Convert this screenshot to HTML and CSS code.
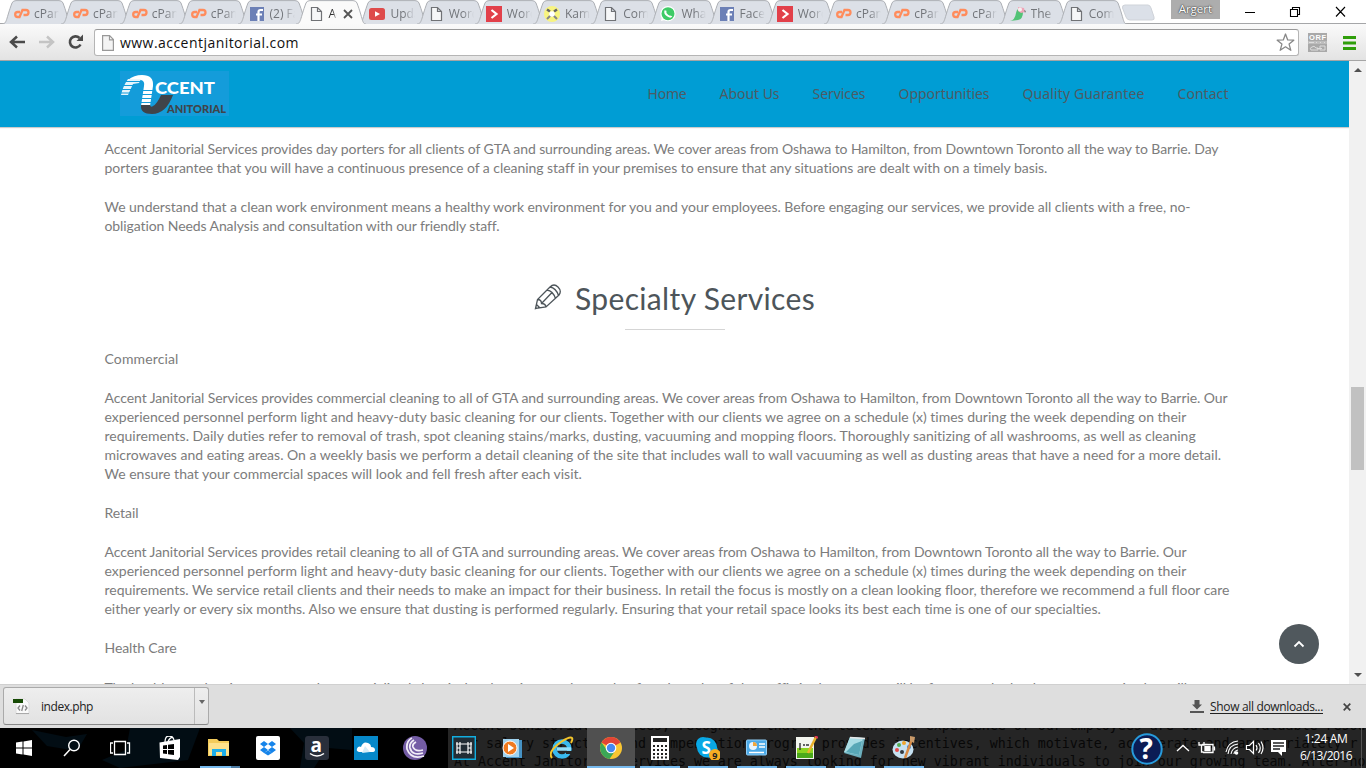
FILE: index.html
```html
<!DOCTYPE html>
<html lang="en">
<head>
<meta charset="utf-8">
<title>Accent Janitorial</title>
<link rel="stylesheet" href="styles.css">
</head>
<body>
<svg class="defs" width="0" height="0">
  <symbol id="tab" viewBox="0 0 70 24"><path d="M0 24C5 24 4 19 10 3Q11 .6 14 .6H57Q60 .6 61 3C67 19 66 24 70 24" stroke="#adb0b5"/></symbol>
  <symbol id="cp" viewBox="0 0 17 16"><path d="M7 6H4.700a2.500 2.500 0 0 0 0 5h1.800L9.500 4H13a2.500 2.500 0 0 1 0 5h-2.500" fill="none" stroke="#ff8c5c" stroke-width="2.300"/></symbol>
  <symbol id="fb" viewBox="0 0 17 16"><path d="M1 1h14v14H1z" fill="#6c80b6"/><path d="M9.500 15V6q0-2 2-2H14M7 8.500h6" fill="none" stroke="#fff" stroke-width="2.200"/></symbol>
  <symbol id="page" viewBox="0 0 17 16"><path d="M3.500 1.500h6l4 4v9h-10zM9.500 1.500v4h4" fill="#f6f7f8" stroke="#707276" stroke-width="1.200"/></symbol>
  <symbol id="yt" viewBox="0 0 17 16"><rect y="2" width="16" height="12" rx="2.500" fill="#de4b4b"/><path d="M6 5.300v5.400L11 8z" fill="#fff"/></symbol>
  <symbol id="red" viewBox="0 0 17 16"><path d="M0 0h16v16H0z" fill="#e2404a"/><path d="M5.500 4l5 4-5 4" fill="none" stroke="#fff" stroke-width="2.200"/></symbol>
  <symbol id="kam" viewBox="0 0 17 16"><circle cx="8" cy="8" r="8" fill="#f8f480"/><path d="M3 13l4-4M13 13L9 9" stroke="#888" stroke-width="2"/><path d="M3 3.500l3 2M13 3.500l-3 2" stroke="#666" stroke-width="2.500"/><circle cx="8" cy="8" r="2.800" fill="#fff"/></symbol>
  <symbol id="wa" viewBox="0 0 17 16"><circle cx="8" cy="7.700" r="7.600" fill="#fff"/><path d="M1 15l1-4 3 3z" fill="#fff"/><circle cx="8" cy="7.700" r="6.500" fill="#3ecb67"/><path d="M5.500 4.500q-1 3 2 5t4 .5" fill="none" stroke="#fff" stroke-width="2"/></symbol>
  <symbol id="bird" viewBox="0 0 17 16"><path d="M0 15q5-1 6-8 1-5 5-5l2 4q0 7-5 8z" fill="#52c376"/><path d="M8 1l6 1 1 4-4 1-3-2z" fill="#efa4b7"/><circle cx="10" cy="3.500" r="2" fill="#f8eef0"/><path d="M14 4l2 1-1 2z" fill="#777"/></symbol>
</svg>

<header class="tabstrip">
  <div class="tab"><svg class="shape"><use href="#tab"/></svg><svg class="fav"><use href="#cp"/></svg><span>cPane</span></div>
  <div class="tab"><svg class="shape"><use href="#tab"/></svg><svg class="fav"><use href="#cp"/></svg><span>cPane</span></div>
  <div class="tab"><svg class="shape"><use href="#tab"/></svg><svg class="fav"><use href="#cp"/></svg><span>cPane</span></div>
  <div class="tab"><svg class="shape"><use href="#tab"/></svg><svg class="fav"><use href="#cp"/></svg><span>cPane</span></div>
  <div class="tab"><svg class="shape"><use href="#tab"/></svg><svg class="fav"><use href="#fb"/></svg><span>(2) Fa</span></div>
  <div class="tab active"><svg class="shape"><use href="#tab"/></svg><svg class="fav"><use href="#page"/></svg><span>Ac</span><svg class="x" width="10" height="10"><path d="M1 1l8 8M9 1L1 9" stroke="#555" stroke-width="1.800"/></svg></div>
  <div class="tab late"><svg class="shape"><use href="#tab"/></svg><svg class="fav"><use href="#yt"/></svg><span>Upda</span></div>
  <div class="tab late"><svg class="shape"><use href="#tab"/></svg><svg class="fav"><use href="#page"/></svg><span>Word</span></div>
  <div class="tab late"><svg class="shape"><use href="#tab"/></svg><svg class="fav"><use href="#red"/></svg><span>Word</span></div>
  <div class="tab late"><svg class="shape"><use href="#tab"/></svg><svg class="fav"><use href="#kam"/></svg><span>Kam</span></div>
  <div class="tab late"><svg class="shape"><use href="#tab"/></svg><svg class="fav"><use href="#page"/></svg><span>Com</span></div>
  <div class="tab late"><svg class="shape"><use href="#tab"/></svg><svg class="fav"><use href="#wa"/></svg><span>Wha</span></div>
  <div class="tab late"><svg class="shape"><use href="#tab"/></svg><svg class="fav"><use href="#fb"/></svg><span>Face</span></div>
  <div class="tab late"><svg class="shape"><use href="#tab"/></svg><svg class="fav"><use href="#red"/></svg><span>Word</span></div>
  <div class="tab late"><svg class="shape"><use href="#tab"/></svg><svg class="fav"><use href="#cp"/></svg><span>cPane</span></div>
  <div class="tab late"><svg class="shape"><use href="#tab"/></svg><svg class="fav"><use href="#cp"/></svg><span>cPane</span></div>
  <div class="tab late"><svg class="shape"><use href="#tab"/></svg><svg class="fav"><use href="#cp"/></svg><span>cPane</span></div>
  <div class="tab late"><svg class="shape"><use href="#tab"/></svg><svg class="fav"><use href="#bird"/></svg><span>The</span></div>
  <div class="tab late"><svg class="shape"><use href="#tab"/></svg><svg class="fav"><use href="#page"/></svg><span>Com</span></div>
  <svg class="newtab" width="34" height="18"><path d="M4 1h23q2 0 3 3l3 9q1 3-2 3H9q-3 0-4-3L1.500 4Q1 1 4 1z" fill="#dbe0e8" stroke="#cfd3d9"/></svg>
  <div class="user">Argert</div>
  <svg class="winctl" width="110" height="24"><path d="M5 12.500h10M50.500 9.500h7v7h-7zM52.500 9V7.500h7v7H58M96 7l9 9.500M105 7l-9 9.500" fill="none" stroke="#000" stroke-width="1.100"/></svg>
</header>

<div class="toolbar">
  <svg class="navicons" width="94" height="36" fill="none">
    <path d="M25 18H12M17 12.500L11 18l6 5.500" stroke="#4a4a4a" stroke-width="2.500"/>
    <path d="M39 18h13M47 12.500l6 5.500-6 5.500" stroke="#c4c4c4" stroke-width="2.500"/>
    <path d="M80.500 20.500a5.600 5.600 0 1 1-1-6.500" stroke="#4a4a4a" stroke-width="2.600"/><path d="M83 10.500v6.500h-6.500z" fill="#4a4a4a"/>
  </svg>
  <div class="omnibox">
    <svg width="12" height="16"><path d="M.6.600h7l3.800 4v10.800H.6zM7.500.600v4.200h4" fill="#f4f4f4" stroke="#999" stroke-width="1.200"/></svg>
    <span class="url" data-w="179">www.accentjanitorial.com</span>
    <svg class="star" width="19" height="19"><path d="M9.500 1l2.200 5.900 6.100.3-4.700 3.900 1.700 6.200-5.300-3.500-5.300 3.500 1.700-6.200L1.200 7.200l6.100-.3z" fill="#fff" stroke="#888" stroke-width="1.300" stroke-linejoin="round"/></svg>
  </div>
  <svg class="ext" width="19" height="19"><path d="M0 0h19v19H0z" fill="#a9a9a9"/><path d="M0 8h19v3H0z" fill="#bdbdbd"/><text x="1" y="7" textLength="17">ORF</text><path d="M1 9.500h5M8 9.500h1M12 9.500h1M16 9.500h1M3 17q-2-2 1-3 2-2 4 1h2v2zM12 13h5v4h-5zM9 15.500h5" stroke="#ddd" fill="none"/></svg>
  <svg class="burger" width="13" height="14"><path d="M0 1.500h13M0 7h13M0 12.500h13" stroke="#2f9e0a" stroke-width="2.800"/></svg>
</div>

<main class="viewport">
  <div class="site">
    <div class="sitebar">
      <svg class="logo" width="109" height="45">
        <path d="M0 0h109v45H0z" fill="#149cda"/>
        <path d="M8 9Q14 4 22 4q12 0 11 11l-3 20h-9l3-20q1-5-3-6z" fill="#fff"/>
        <path d="M8 8h13l-2 4-6 1-5 11H1Q3 15 8 8z" fill="#e8f5fc"/>
        <path d="M0 10.500h20M0 14.500h20M0 18.500h20M0 22h20M20 19.500h14M20 23.500h14M20 27.500h14M20 31.500h14" stroke="#149cda" stroke-width="1.200"/>
        <path d="M21 34h9q1 3 3 1 4-2 8-11h12Q46 43 32 43 20 43 21 34z" fill="#404449"/>
        <text class="l1" x="35" y="22.500" textLength="60" lengthAdjust="spacingAndGlyphs">CCENT</text>
        <text class="l2" x="47" y="41.500" textLength="59" lengthAdjust="spacingAndGlyphs">ANITORIAL</text>
      </svg>
      <nav><a data-w="39">Home</a><a data-w="60">About Us</a><a data-w="53">Services</a><a data-w="91">Opportunities</a><a data-w="122">Quality Guarantee</a><a data-w="51">Contact</a></nav>
    </div>
    <article>
      <p><span data-w="1114">Accent Janitorial Services provides day porters for all clients of GTA and surrounding areas. We cover areas from Oshawa to Hamilton, from Downtown Toronto all the way to Barrie. Day</span>
      <span data-w="943">porters guarantee that you will have a continuous presence of a cleaning staff in your premises to ensure that any situations are dealt with on a timely basis.</span></p>
      <p><span data-w="1086">We understand that a clean work environment means a healthy work environment for you and your employees. Before engaging our services, we provide all clients with a free, no-</span>
      <span data-w="395">obligation Needs Analysis and consultation with our friendly staff.</span></p>
      <h2><svg width="28" height="28" fill="none" stroke="#4d555a" stroke-width="1.300"><path d="M1.500 25.500l2-9L16 4q4-4 8 0t1 8L12 24zM3.500 16.500q4 0 4 4 4 0 4.500 3.500M16 4q6 1 8.500 8.500M13 7q6 1 8.500 8.500M7.500 20.500L18 9.500M1.500 25.500l4-1-3-3z"/></svg><span data-w="240">Specialty Services</span></h2>
      <p><span data-w="74">Commercial</span></p>
      <p><span data-w="1123">Accent Janitorial Services provides commercial cleaning to all of GTA and surrounding areas. We cover areas from Oshawa to Hamilton, from Downtown Toronto all the way to Barrie. Our</span>
      <span data-w="1082">experienced personnel perform light and heavy-duty basic cleaning for our clients. Together with our clients we agree on a schedule (x) times during the week depending on their</span>
      <span data-w="1092">requirements. Daily duties refer to removal of trash, spot cleaning stains/marks, dusting, vacuuming and mopping floors. Thoroughly sanitizing of all washrooms, as well as cleaning</span>
      <span data-w="1117">microwaves and eating areas. On a weekly basis we perform a detail cleaning of the site that includes wall to wall vacuuming as well as dusting areas that have a need for a more detail.</span>
      <span data-w="477">We ensure that your commercial spaces will look and fell fresh after each visit.</span></p>
      <p><span data-w="34">Retail</span></p>
      <p><span data-w="1082">Accent Janitorial Services provides retail cleaning to all of GTA and surrounding areas. We cover areas from Oshawa to Hamilton, from Downtown Toronto all the way to Barrie. Our</span>
      <span data-w="1082">experienced personnel perform light and heavy-duty basic cleaning for our clients. Together with our clients we agree on a schedule (x) times during the week depending on their</span>
      <span data-w="1125">requirements. We service retail clients and their needs to make an impact for their business. In retail the focus is mostly on a clean looking floor, therefore we recommend a full floor care</span>
      <span data-w="997">either yearly or every six months. Also we ensure that dusting is performed regularly. Ensuring that your retail space looks its best each time is one of our specialties.</span></p>
      <p><span data-w="72">Health Care</span></p>
      <p class="next"><span data-w="1082">The healthcare cleaning sector can be a specialized chemical and equipment due to that fact that a lot of the traffic in these areas will be from people that have compromised or still</span></p>
    </article>
    <div class="totop"><svg width="12" height="8"><path d="M1.500 6.500L6 2l4.500 4.500" fill="none" stroke="#fff" stroke-width="1.800"/></svg></div>
  </div>
  <div class="scrollbar"><i class="up"></i><i class="thumb"></i><i class="down"></i></div>
</main>

<section class="downloads">
  <div class="dl">
    <svg width="18" height="17"><path d="M3 1h9l4 4v11H3z" fill="#fafafa" stroke="#ddd"/><path d="M0 1h10v4H0z" fill="#174a05"/><path d="M7 7.500L5 10l2 2.500M12 7.500l2 2.500-2 2.500M10.300 7L8.700 13" fill="none" stroke="#888" stroke-width="1.300"/><path d="M3 15.500h13" stroke="#aaa"/></svg>
    <span data-w="52">index.php</span><div class="drop"><i></i></div>
  </div>
  <div class="showall">
    <svg width="14" height="13"><path d="M4.500 0h5v4.500H12L7 9.500l-5-5h2.500zM0 11h14v2H0z" fill="#555"/></svg>
    <span data-w="113">Show all downloads...</span>
    <svg class="x2" width="8" height="8"><path d="M.7.700l6.600 6.600M7.300.700L.7 7.300" stroke="#444" stroke-width="1.700"/></svg>
  </div>
</section>

<footer class="taskbar">
  <svg class="wall" width="448" height="40" fill="#020d14"><path d="M32 2l34 7 21-3-10 17-30-5zM130 0h70l-12 32-68 8-18-8 24-10zM290 0h44v9l-20 31h-14l4-25zM330 0h22v22l-24-2z"/></svg>
  <pre class="ghost">Accent Janitorial Services, recognizes that the talent and experience of our employees are our most valuable resource
Our salary structure and compensation program provides incentives, which motivate, accelerate and appropriately r
At Accent Janitorial Services we are always looking for new vibrant individuals to join our growing team. After-hou</pre>
  <div class="apps">
    <div><svg viewBox="0 0 24 24"><path d="M4 6.500L10.500 5.500v6H4zM11.500 5.400L20 4v7.500h-8.500zM4 12.500h6.500v6L4 17.500zM11.500 12.500H20V20l-8.500-1.400z" fill="#fff"/></svg></div>
    <div><svg viewBox="0 0 24 24"><circle cx="13" cy="9.500" r="5.300" fill="none" stroke="#fff" stroke-width="1.400"/><path d="M9 13.500L3 20" stroke="#fff" stroke-width="1.500"/></svg></div>
    <div><svg viewBox="0 0 24 24"><path d="M4.500 5.500h11v13h-11zM3 7H.5v10H3M17 7h2.500v10H17" fill="none" stroke="#fff" stroke-width="1.300"/></svg></div>
    <div><svg viewBox="0 0 24 24"><path d="M.5 6.500L21 3v18l-2 3-18-2z" fill="#fff"/><path d="M6 6Q6 0 10 0t5 4M9 6q1-4 5-5" fill="none" stroke="#fff" stroke-width="1.300"/><path d="M4 9.500l4-.6v4H4zM9 8.700l6-.7v5H9zM4 14h4v4l-4-.5zM9 14h6v5l-6-.8z" fill="#000"/></svg></div>
    <div class="run stack"><svg viewBox="0 0 24 24"><path d="M0 3h9l2 2h10v15H0z" fill="#f3cb5b"/><path d="M1 7h20v12H1z" fill="#fde18c"/><path d="M4 20v-7h14v7h-4v-4H8v4z" fill="#1eaee8"/></svg></div>
    <div><svg viewBox="0 0 24 24"><rect width="24" height="24" rx="2" fill="#fff"/><path d="M8 5l4 3-4 3-4-3zM16 5l4 3-4 3-4-3zM8 11l4 3-4 3-4-3zM16 11l4 3-4 3-4-3zM8 17l4-2.500 4 2.500-4 2.500z" fill="#1684ea"/></svg></div>
    <div><svg viewBox="0 0 24 24"><rect width="24" height="24" rx="3" fill="#292f3b"/><text class="amz" x="5.500" y="15.500">a</text><path d="M5 17.500q7 5 14 0" fill="none" stroke="#fff" stroke-width="1.500"/></svg></div>
    <div><svg viewBox="0 0 24 24"><path d="M0 0h24v24H0z" fill="#0688c9"/><path d="M5 16q-4-1-1-5 2-1 3 0 2-6 7-4 3 1 3 4 4 0 4 3 0 2-3 2z" fill="#fff"/><path d="M8 17l3-7 5 6z" fill="#d4ecf7"/></svg></div>
    <div><svg viewBox="0 0 24 24"><circle cx="12" cy="12" r="12" fill="#745da5"/><g fill="none" stroke="#f1edf7" stroke-width="1.800"><path d="M21 20Q8 24 4 13 3 5 9 2M20 17Q9 20 7 12q-1-5 4-8M20 14q-8 2-10-3-1-3 3-5"/></g></svg></div>
    <div><svg viewBox="0 0 24 24"><path d="M.7.700h22.600v22.600H.7z" fill="#222d35" stroke="#12aee0" stroke-width="1.400"/><path d="M5 6v12M8 6v12M16 6v12M19 6v12M4 8h16M4 16h16M5 12h3M16 12h3" stroke="#fff" stroke-width="1.200"/></svg></div>
    <div><svg viewBox="0 0 24 24"><path d="M5 4h16v18H5z" fill="#4692c4"/><path d="M2 3h16v18H2z" fill="#9fd2ef"/><circle cx="9" cy="12" r="7" fill="#f07a20" stroke="#fff"/><path d="M7 8v8l6-4z" fill="#fff"/></svg></div>
    <div><svg viewBox="0 0 24 24"><circle cx="12" cy="13" r="7.500" fill="none" stroke="#39b9ee" stroke-width="4.500"/><path d="M7 13h14" stroke="#93def8" stroke-width="3.500"/><path d="M16 15h7v3h-7z" fill="#252525"/><path d="M2 22Q-3 16 11 6q9-6 11-4 1 1-1 5" fill="none" stroke="#f3c52b" stroke-width="2"/></svg></div>
    <div class="run current"><svg viewBox="0 0 24 24"><circle cx="12" cy="12" r="11" fill="#f9c632"/><path d="M12 12L2.500 6.500a11 11 0 0 1 19 0z" fill="#e24436"/><path d="M2.500 6.500a11 11 0 0 0 8 16.400L16 15l-8-1z" fill="#3ba757"/><circle cx="12" cy="12" r="5.300" fill="#fff"/><circle cx="12" cy="12" r="4.200" fill="#4688f1"/></svg></div>
    <div class="run"><svg viewBox="0 0 24 24"><path d="M3 0h18v24H3z" fill="#fff"/><path d="M5 2h14v4H5z" fill="#222"/><path d="M5 10h14M5 14h14M5 18h14M5 21.500h14" stroke="#222" stroke-width="2" stroke-dasharray="2 2"/></svg></div>
    <div class="run"><svg viewBox="0 0 24 24"><circle cx="7" cy="8" r="7" fill="#09a8e5"/><circle cx="15" cy="15" r="7" fill="#09a8e5"/><circle cx="11" cy="11.500" r="10" fill="#09a8e5"/><text class="sky" x="5.500" y="17.500">S</text><circle cx="19" cy="19" r="6" fill="#f8ad22"/><text class="nine" x="16.300" y="22.500">9</text></svg></div>
    <div class="run"><svg viewBox="0 0 24 24"><rect x="1.500" y="4" width="20" height="15" rx="1" fill="#4ba9e7" stroke="#90cef7"/><circle cx="8" cy="10" r="4" fill="#e7f4fe"/><path d="M8 10V6a4 4 0 0 1 4 4z" fill="#f0a63b"/><path d="M14 8h6M14 11h6M4 16.500h15" stroke="#fff" stroke-width="1.700"/></svg></div>
    <div class="run"><svg viewBox="0 0 24 24"><path d="M2 1h18v22H2z" fill="#f3f5ee"/><path d="M3 12h16v10H3z" fill="#8bd420"/><path d="M3 17h16v5H3z" fill="#4ba91b"/><path d="M6 7v7M9 9h2M12 9h3" stroke="#333" stroke-width="1.400"/><path d="M22 1L14 17" stroke="#eab22c" stroke-width="2.500"/><path d="M21 0l3 2" stroke="#d35" stroke-width="2"/></svg></div>
    <div class="run"><svg viewBox="0 0 24 24"><path d="M7 1l15 1-4 20L1 17z" fill="#6cafbd"/><path d="M7 1l13 1-4 17L1 16z" fill="#a9dce4"/><path d="M11 8l8-3-3 14-13-3z" fill="#58a7b6"/><path d="M7 1.500l15 1" stroke="#e6e6e6" stroke-width="1.500"/></svg></div>
    <div class="run"><svg viewBox="0 0 24 24"><ellipse cx="11" cy="13.500" rx="10.500" ry="9" fill="#c6e1f2"/><circle cx="5" cy="14" r="2" fill="#e34b4b"/><circle cx="7" cy="9" r="2" fill="#52ad52"/><circle cx="12" cy="7" r="2" fill="#f1a42c"/><circle cx="17" cy="11" r="2" fill="#3d80d4"/><circle cx="10" cy="16" r="2" fill="#303840"/><path d="M20 3l-7 19" stroke="#d98b45" stroke-width="2.500"/><path d="M18 0l5 1-1 6-4-2z" fill="#c99a69"/></svg></div>
  </div>
  <div class="tray">
    <svg width="160" height="40" fill="none" stroke="#fff" stroke-width="1.300"><circle cx="16" cy="21" r="14.700" fill="#0b1c55" stroke="#279bdc" stroke-width="2"/><text class="q" x="8.500" y="31">?</text><path d="M46 23l6-5.500 6 5.500"/><g transform="translate(3)"><path d="M68 16.500h11v8H69M80.500 18.500v4M65 14v3h5v-3M67.500 17v7h2"/><path d="M71 18.500h5v4h-5z" fill="#fff"/></g><g transform="translate(10)"><path d="M87 26q1-9 10-10M90 26q1-6 7-7M93 26q0-3 4-4M85 24q2-10 12-11" stroke-width="1.100"/><circle cx="95.500" cy="25" r="1.800" fill="#fff" stroke="none"/></g><g transform="translate(9)"><path d="M106.500 17.500h3l4-4v12l-4-4h-3zM116 17q2 3 0 5.500M118.500 15q3.500 5 0 10M121 13.500q4 6.500 0 12.500" stroke-width="1.200"/></g><g transform="translate(9)"><path d="M131 12h15v12h-4v4l-4-4h-7z" fill="#fff" stroke="none"/><path d="M133 15h11M133 18h11M133 21h7" stroke="#222"/></g></svg>
    <div class="clock"><span data-w="43">1:24 AM</span><span data-w="52">6/13/2016</span></div>
    <i class="edge"></i>
  </div>
</footer>
<script src="fit.js"></script>
</body>
</html>
```
FILE: styles.css
```css
* { box-sizing: border-box; }
body { margin: 0; width: 1366px; height: 768px; overflow: hidden; display: flex; flex-direction: column; font-family: "Open Sans", "Noto Sans", sans-serif; background: #fff; }
svg { flex: none; display: block; }
.defs { position: absolute; }
[data-w] { white-space: nowrap; }

.tabstrip { height: 24px; flex: none; display: flex; padding-left: 2px; background: #fff; position: relative; border-bottom: 1px solid #a5a6a8; }
.tab { position: relative; width: 58.9px; height: 24px; flex: none; display: flex; align-items: center; padding: 3px 0 0 11px; }
.tab.late { width: 58.2px; }
.shape { position: absolute; left: 0; top: 0; width: 70px; height: 24px; fill: #dce0e7; }
.fav { position: relative; width: 17px; height: 16px; }
.tab span { position: relative; margin-left: 4px; width: 25px; overflow: hidden; white-space: nowrap; font-size: 12px; line-height: 18px; color: #72757a; -webkit-mask-image: linear-gradient(90deg, #000 55%, transparent); mask-image: linear-gradient(90deg, #000 55%, transparent); }
.tab.active { z-index: 2; width: 62px; }
.active .shape { fill: #fafafa; }
.tab.active .fav { margin-left: 1px; }
.tab.active span { width: 9px; margin-left: 3px; flex: none; color: #333; }
.x { position: relative; flex: none; margin-left: 6px; }
.newtab { margin: 4px 0 0 6px; }
.user { margin-left: 16px; width: 49px; height: 19px; background: #adadad; color: #fff; font-size: 11.500px; line-height: 18px; text-align: center; text-shadow: 0 0 2px #333, 0 0 1px #333; }
.winctl { margin-left: 20px; }

.toolbar { height: 37px; flex: none; display: flex; background: linear-gradient(#fafafa, #e3e3e3); border-bottom: 1px solid #a5a5a5; }
.omnibox { width: 1205px; height: 27px; margin-top: 5px; border: 1px solid #b5b5b5; border-top-color: #999; border-radius: 3px; background: #fff; display: flex; align-items: center; padding: 0 3px 0 7px; }
.url { margin-left: 6px; font-size: 14px; color: #111; }
.star { margin-left: auto; }
.ext { margin: 9px 0 0 9px; font: bold 7.500px "Liberation Sans", sans-serif; }
.ext text { fill: #fff; }
.burger { margin: 12px 0 0 16px; }

.viewport { height: 623px; flex: none; display: flex; }
.site { width: 1349px; position: relative; overflow: hidden; }
.sitebar { height: 66px; background: #009dd4; box-shadow: 0 1px 1px #ccc; display: flex; padding-left: 120px; }
.logo { margin-top: 10px; }
.logo text { font-family: Lato, sans-serif; font-weight: 900; }
.l1 { font-size: 17px; fill: #fff; }
.l2 { font-size: 10.500px; fill: #404449; }
nav { display: flex; gap: 33px; margin-left: 418.500px; font: 14px/66px "Noto Sans", sans-serif; color: #4d5b64; }
article { padding: 12px 0 0 104.500px; font-family: Lato, sans-serif; font-size: 14px; line-height: 19px; color: #7c7c7c; }
article p { margin: 0 0 20px; display: flex; flex-direction: column; align-items: flex-start; }
h2 { margin: 46px 9px 19px 0; width: 1140px; height: 49px; position: relative; display: flex; justify-content: center; gap: 13px; font-size: 30px; font-weight: 400; line-height: 35px; color: #4d555a; }
h2 svg { margin-top: 2px; }
h2::after { content: ""; position: absolute; left: 520px; bottom: 0; width: 100px; height: 1px; background: #d5d5d5; }
article .next { padding-top: 1px; }
.totop { position: absolute; left: 1279px; top: 563px; width: 40px; height: 40px; border-radius: 50%; background: #50585d; display: flex; align-items: center; justify-content: center; }
.scrollbar { width: 17px; background: #f1f1f1; display: flex; flex-direction: column; align-items: center; }
.scrollbar .up { border: 4px solid transparent; border-top: 0; border-bottom: 4px solid #505050; margin-top: 7px; }
.scrollbar .thumb { width: 13px; height: 83px; background: #c1c1c1; margin-top: 315px; }
.scrollbar .down { border: 4px solid transparent; border-bottom: 0; border-top: 4px solid #505050; margin-top: auto; margin-bottom: 7px; }

.downloads { height: 44px; flex: none; background: #dedede; border-top: 1px solid #d0d0d0; display: flex; justify-content: space-between; font-size: 12px; color: #222; z-index: 1; }
.dl { margin: 2px 0 0 3px; width: 206px; height: 38px; border: 1px solid #aaa; border-bottom-color: #888; border-radius: 3px; background: linear-gradient(#eee, #e2e2e2); display: flex; align-items: center; padding-left: 9px; }
.dl span { margin-left: 10px; }
.drop { margin-left: auto; width: 14px; height: 36px; border-left: 1px solid #bbb; display: flex; justify-content: center; }
.drop i { height: 0; margin-top: 12px; border: 3px solid transparent; border-top: 4px solid #666; border-bottom: 0; }
.showall { display: flex; align-items: center; padding-right: 15px; }
.showall span { margin: 0 20px 0 6px; text-decoration: underline; text-underline-offset: 2px; }

.taskbar { height: 40px; flex: none; position: relative; background: #000; overflow: hidden; display: flex; }
.wall { position: absolute; left: 0; top: 0; }
.ghost { position: absolute; left: 448px; top: 0; width: 918px; height: 40px; overflow: hidden; margin: 0; padding-left: 6px; background: #252525; color: #080808; font: 13.290px/18px "DejaVu Sans Mono", monospace; }
.ghost::before { content: ""; display: block; margin-top: -11px; }
.apps { position: relative; display: flex; gap: .9px; }
.apps div { width: 48px; height: 40px; display: flex; justify-content: center; padding-top: 8px; position: relative; }
.apps svg { width: 24px; height: 24px; }
.run::after { content: ""; position: absolute; left: 4px; right: 4px; bottom: 0; height: 2px; background: #76b9ed; }
.stack::after { background: linear-gradient(90deg, #76b9ed 31px, #4c7ba3 31px); }
.apps .current { background: #505050; }
.current::after { left: 0; right: 0; }
.amz { font: bold 19px "Open Sans", sans-serif; fill: #fff; }
.sky { font: bold 17px "Open Sans", sans-serif; fill: #fff; }
.nine { font: bold 9px "Open Sans", sans-serif; fill: #222; }
.tray { position: relative; margin-left: auto; display: flex; width: 235px; color: #fff; }
.q { font: bold 28px "Open Sans", sans-serif; fill: #fff; stroke: none; }
.clock { margin-left: 6px; width: 58px; font-size: 12px; line-height: 17px; padding-top: 2px; display: flex; flex-direction: column; align-items: center; }
.edge { border-left: 1px solid #555; margin-left: 6px; }
```
FILE: fit.js
```js
// Tracks each marked label so that it spans its intended width.
document.querySelectorAll('[data-w]').forEach(function (el) {
  var range = document.createRange();
  range.selectNodeContents(el);
  var natural = range.getBoundingClientRect().width;
  el.style.letterSpacing = (el.dataset.w - natural) / el.textContent.length + 'px';
});
```
